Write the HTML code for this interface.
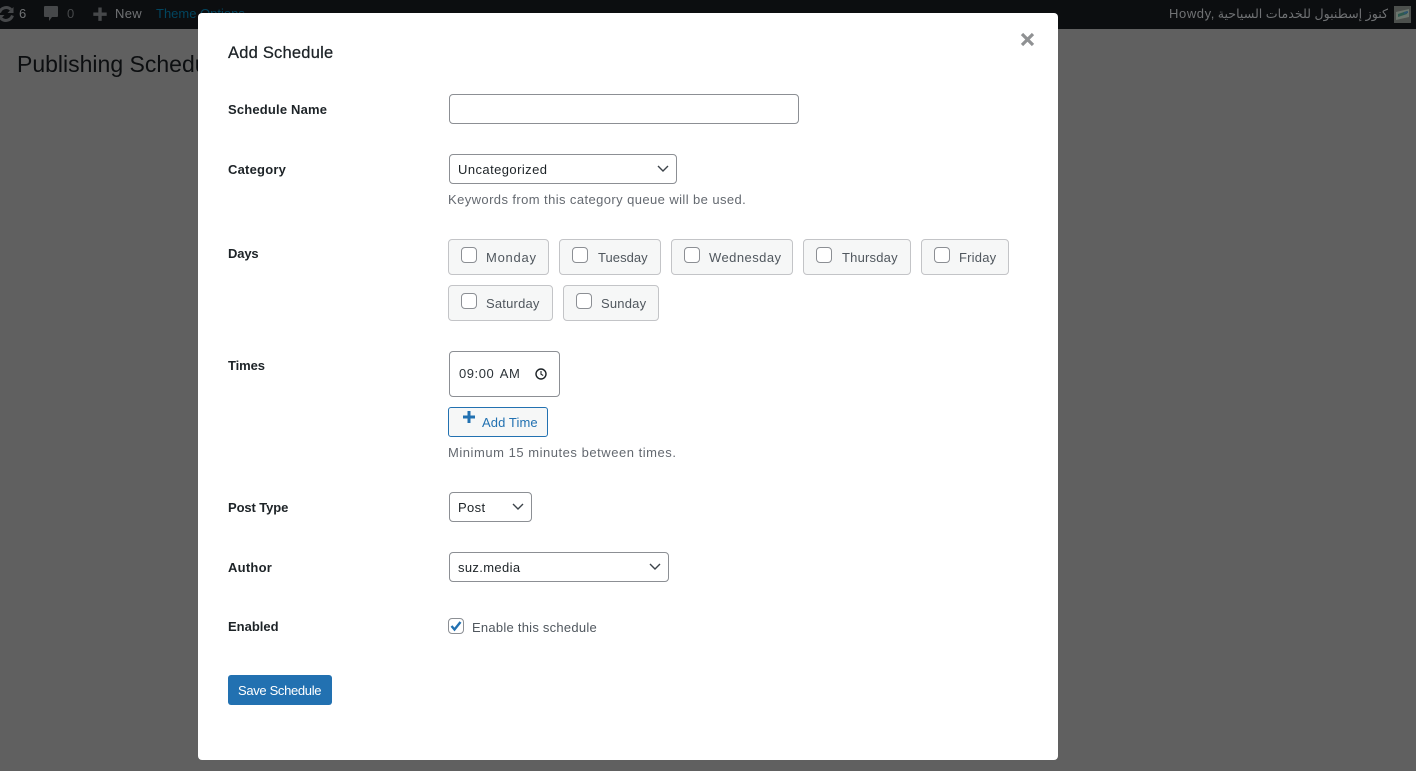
<!DOCTYPE html>
<html><head><meta charset="utf-8"><style>
html,body{margin:0;padding:0;width:1416px;height:771px;overflow:hidden;background:#606060;font-family:"Liberation Sans","Noto Sans CJK SC",sans-serif;font-size:13px;color:#1d2327}
.a{position:absolute;white-space:nowrap}
.t{position:absolute;white-space:nowrap;line-height:18px;letter-spacing:.35px}
.b{font-weight:700;letter-spacing:.1px;color:#1d2327}
.g{color:#646970}
.d{color:#50575e;letter-spacing:.2px}
.box{position:absolute;box-sizing:border-box;background:#fff;border:1px solid #8c8f94;border-radius:4px}
.day{position:absolute;box-sizing:border-box;height:36px;background:#f6f7f7;border:1px solid #c3c4c7;border-radius:4px}
.cb{position:absolute;box-sizing:border-box;width:16px;height:16px;background:#fff;border:1px solid #8c8f94;border-radius:4px}
svg{position:absolute;display:block}
</style></head><body>
<div class="a" style="left:0;top:0;width:1416px;height:29px;background:#0c0e10"></div>
<svg style="left:-4px;top:4px" width="20" height="20" viewBox="0 0 20 20"><path d="M3.500 8.500A7 7 0 0 1 15 5.500" stroke="#46484a" stroke-width="3" fill="none"/><path d="M16.500 11.500A7 7 0 0 1 5 14.500" stroke="#46484a" stroke-width="3" fill="none"/><path d="M17.500 3v6h-6zM2.500 17v-6h6z" fill="#46484a"/></svg>
<span class="t" style="left:19px;top:5px;color:#707274">6</span>
<svg style="left:43px;top:5px" width="16" height="18" viewBox="0 0 16 18"><path d="M2 1h12a1 1 0 0 1 1 1v9a1 1 0 0 1-1 1H9l-3 4v-4H2a1 1 0 0 1-1-1V2a1 1 0 0 1 1-1z" fill="#46484a"/></svg>
<span class="t" style="left:67px;top:5px;color:#46484a">0</span>
<svg style="left:92px;top:6px" width="16" height="16" viewBox="0 0 16 16"><path d="M6.300 1.500h3.400v5h5v3.400h-5v5H6.300v-5h-5V6.500h5z" fill="#46484a"/></svg>
<span class="t" style="left:115px;top:5px;color:#707274;letter-spacing:.3px">New</span>
<span class="t" style="left:156px;top:5px;color:#02455f;letter-spacing:0">Theme Options</span>
<span class="t" style="left:1169px;top:5px;color:#707274;letter-spacing:.6px">Howdy,</span>
<span class="t" dir="rtl" style="right:28px;top:5px;color:#707274;font-size:12.600px;font-family:'Liberation Sans','DejaVu Sans',sans-serif;letter-spacing:0">كنوز إسطنبول للخدمات السياحية</span>
<div class="a" style="left:1394px;top:6px;width:17px;height:17px;background:#4c504d"></div>
<svg style="left:1394px;top:6px" width="17" height="17" viewBox="0 0 17 17"><path d="M2 6l13-3v8L2 14z" fill="#6b756d"/><path d="M4 8l9-3v3l-9 3z" fill="#2e5a50"/><path d="M10 6l4-1v2l-4 1z" fill="#2e5470"/></svg>
<span class="t" style="left:17px;top:48px;font-size:23px;line-height:32px;color:#0c0e10;letter-spacing:0">Publishing Schedule</span>

<div class="a" style="left:198px;top:13px;width:860px;height:747px;background:#fff;border-radius:4px"></div>
<span class="t" style="left:228px;top:42px;font-size:16.500px;line-height:22px;letter-spacing:.22px;-webkit-text-stroke:.25px #1d2327">Add Schedule</span>
<svg style="left:1020px;top:32px" width="15" height="15" viewBox="0 0 15 15"><path d="M2 2l11 11M13 2L2 13" stroke="#8f9193" stroke-width="3.200" fill="none"/></svg>

<span class="t b" style="left:228px;top:101px;letter-spacing:.18px">Schedule Name</span>
<div class="box" style="left:449px;top:94px;width:350px;height:30px"></div>

<span class="t b" style="left:228px;top:161px;letter-spacing:.22px">Category</span>
<div class="box" style="left:449px;top:154px;width:228px;height:30px"></div>
<span class="t" style="left:458px;top:161px;letter-spacing:.43px">Uncategorized</span>
<svg style="left:656px;top:164px" width="14" height="10" viewBox="0 0 14 10"><path d="M2 2l5 5 5-5" stroke="#3c434a" stroke-width="1.400" fill="none"/></svg>
<span class="t g" style="left:448px;top:191px;letter-spacing:.41px">Keywords from this category queue will be used.</span>

<span class="t b" style="left:228px;top:245px;letter-spacing:-.15px">Days</span>
<div class="day" style="left:448px;top:239px;width:101px"></div>
<div class="cb" style="left:461px;top:247px"></div><span class="t d" style="left:486px;top:249px;letter-spacing:.75px">Monday</span>
<div class="day" style="left:559px;top:239px;width:102px"></div>
<div class="cb" style="left:572px;top:247px"></div><span class="t d" style="left:598px;top:249px;letter-spacing:.05px">Tuesday</span>
<div class="day" style="left:671px;top:239px;width:122px"></div>
<div class="cb" style="left:684px;top:247px"></div><span class="t d" style="left:709px;top:249px;letter-spacing:.45px">Wednesday</span>
<div class="day" style="left:803px;top:239px;width:108px"></div>
<div class="cb" style="left:816px;top:247px"></div><span class="t d" style="left:842px;top:249px">Thursday</span>
<div class="day" style="left:921px;top:239px;width:88px"></div>
<div class="cb" style="left:934px;top:247px"></div><span class="t d" style="left:959px;top:249px">Friday</span>
<div class="day" style="left:448px;top:285px;width:105px"></div>
<div class="cb" style="left:461px;top:293px"></div><span class="t d" style="left:486px;top:295px">Saturday</span>
<div class="day" style="left:563px;top:285px;width:96px"></div>
<div class="cb" style="left:576px;top:293px"></div><span class="t d" style="left:601px;top:295px">Sunday</span>

<span class="t b" style="left:228px;top:357px;letter-spacing:-.1px">Times</span>
<div class="box" style="left:449px;top:351px;width:111px;height:46px"></div>
<span class="t" style="left:459px;top:365px;word-spacing:2px;letter-spacing:.55px;color:#2c3338">09:00 AM</span>
<svg style="left:534px;top:367px" width="14" height="14" viewBox="0 0 14 14"><circle cx="7" cy="7" r="5" stroke="#1d2327" stroke-width="1.400" fill="none"/><path d="M7 4v3.200l2.200 1.300" stroke="#1d2327" stroke-width="1.100" fill="none"/></svg>
<div class="a" style="left:448px;top:407px;width:100px;height:30px;box-sizing:border-box;background:#f6f7f7;border:1px solid #2271b1;border-radius:3px"></div>
<svg style="left:461px;top:409px" width="16" height="16" viewBox="0 0 16 16"><path d="M6.500 2h3v4.500H14v3H9.500V14h-3V9.500H2v-3h4.500z" fill="#2271b1"/></svg>
<span class="t" style="left:482px;top:414px;color:#2271b1;letter-spacing:.1px">Add Time</span>
<span class="t g" style="left:448px;top:444px;letter-spacing:.53px">Minimum 15 minutes between times.</span>

<span class="t b" style="left:228px;top:499px;letter-spacing:-.1px">Post Type</span>
<div class="box" style="left:449px;top:492px;width:83px;height:30px"></div>
<span class="t" style="left:458px;top:499px">Post</span>
<svg style="left:511px;top:502px" width="14" height="10" viewBox="0 0 14 10"><path d="M2 2l5 5 5-5" stroke="#3c434a" stroke-width="1.400" fill="none"/></svg>

<span class="t b" style="left:228px;top:559px;letter-spacing:.25px">Author</span>
<div class="box" style="left:449px;top:552px;width:220px;height:30px"></div>
<span class="t" style="left:458px;top:559px">suz.media</span>
<svg style="left:648px;top:562px" width="14" height="10" viewBox="0 0 14 10"><path d="M2 2l5 5 5-5" stroke="#3c434a" stroke-width="1.400" fill="none"/></svg>

<span class="t b" style="left:228px;top:618px;letter-spacing:0">Enabled</span>
<div class="cb" style="left:448px;top:618px"></div>
<svg style="left:448px;top:618px" width="16" height="16" viewBox="0 0 16 16"><path d="M3.500 8l3 3.500 6-7.500" stroke="#2271b1" stroke-width="2.400" fill="none"/></svg>
<span class="t" style="left:472px;top:619px;color:#50575e;letter-spacing:.25px">Enable this schedule</span>

<div class="a" style="left:228px;top:675px;width:104px;height:30px;background:#2271b1;border-radius:3px"></div>
<span class="t" style="left:238px;top:682px;color:#fff;letter-spacing:-.33px">Save Schedule</span>
</body></html>
